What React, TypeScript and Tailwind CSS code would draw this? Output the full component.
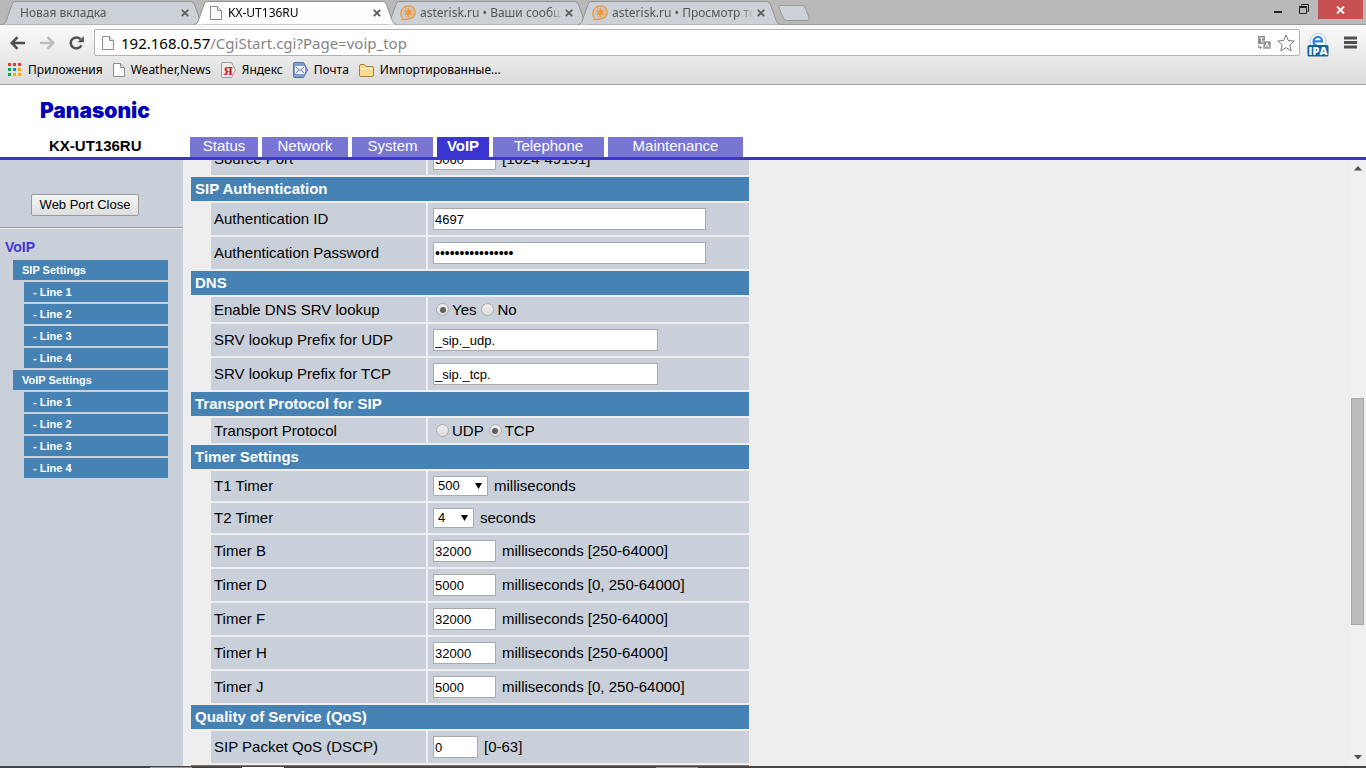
import React from "react";
import clsx from "clsx";

interface BrowserTab {
    title: string;
    icon?: React.ReactNode;
    active?: boolean;
}

interface FieldRowProps {
    label: string;
    htmlFor?: string;
    height?: string;
    children: React.ReactNode;
}

const FileIcon = () => (
    <svg width="12" height="14" viewBox="0 0 12 14" className="shrink-0">
        <path d="M0.5 0.5H7.5L11.5 4.5V13.5H0.5Z" fill="#fafafa" stroke="#8c8c8c" />
        <path d="M7.5 0.5V4.5H11.5" fill="#e4e4e4" stroke="#8c8c8c" />
    </svg>
);

const AsteriskIcon = () => (
    <svg width="16" height="16" viewBox="0 0 16 16" fill="none" stroke="#f0973a" className="shrink-0">
        <path d="M3 13.2C1.2 11.8 0.7 9.5 0.9 7.5C1.6 3.6 5 1 8.6 1C12.6 1 15.2 3.8 15.2 7.2C15.2 11 12.2 13.4 9 13.6L5 14.6L1 14.4" strokeWidth="1.3" />
        <path d="M13 7.4C13 10 11 12 8.4 12C5.8 12 3.6 10.4 3.6 7.6C3.6 5 5.6 2.9 8.4 2.9C11 2.9 13 4.8 13 7.4Z" strokeWidth="0.6" />
        <path d="M8.3 3.6V11.2M5 5.5L11.6 9.3M11.6 5.5L5 9.3" strokeWidth="2" />
    </svg>
);

const CloseIcon = () => (
    <svg width="8" height="8" viewBox="0 0 8 8" stroke="#5a5a5a" strokeWidth="1.8">
        <path d="M0.8 0.8L7.2 7.2M7.2 0.8L0.8 7.2" />
    </svg>
);

const browserTabs: BrowserTab[] = [
    { title: "Новая вкладка" },
    { title: "KX-UT136RU", icon: <FileIcon />, active: true },
    { title: "asterisk.ru • Ваши сообщения", icon: <AsteriskIcon /> },
    { title: "asterisk.ru • Просмотр темы", icon: <AsteriskIcon /> },
];

const AppsIcon = () => (
    <svg width="14" height="14" viewBox="0 0 14 14">
        <path d="M0 0h3v3H0zM5 0h3v3H5zM10 0h3v3h-3z" fill="#e53a35" />
        <path d="M0 5h3v3H0z" fill="#1f9d55" />
        <path d="M5 5h3v3H5z" fill="#2f7de1" />
        <path d="M10 5h3v3h-3zM10 10h3v3h-3zM5 10h3v3H5z" fill="#f5a800" />
        <path d="M0 10h3v3H0z" fill="#1f9d55" />
    </svg>
);

const YandexIcon = () => (
    <svg width="15" height="16" viewBox="0 0 15 16">
        <path d="M1.5 0.5H10.5L14.5 8L10.5 15.5H1.5Q0.5 15.5 0.5 14.5V1.5Q0.5 0.5 1.5 0.5Z" fill="#ececec" stroke="#9c9c9c" />
        <text x="2.5" y="13" fontSize="13" fontWeight="700" fontFamily="Liberation Serif, serif" fill="#e01010">Я</text>
    </svg>
);

const MailIcon = () => (
    <svg width="15" height="16" viewBox="0 0 15 16">
        <path d="M1.5 0.5H10.5L14.5 8L10.5 15.5H1.5Q0.5 15.5 0.5 14.5V1.5Q0.5 0.5 1.5 0.5Z" fill="#7f9bd0" stroke="#5470ad" />
        <path d="M2.5 4.5H11.5V11.5H2.5Z" fill="#eef3fb" stroke="#fff" />
        <path d="M2.5 4.5L7 8.5L11.5 4.5M2.5 11.5L5.8 7.8M11.5 11.5L8.2 7.8" fill="none" stroke="#5d79b5" />
    </svg>
);

const FolderIcon = () => (
    <svg width="15" height="13" viewBox="0 0 15 13">
        <path d="M0.5 11.5V2Q0.5 0.5 2 0.5H5.5L7 2.5H13Q14.5 2.5 14.5 4V11Q14.5 12.5 13 12.5H2Q0.5 12.5 0.5 11.5Z" fill="#fbdc8c" stroke="#a67e35" />
        <path d="M1.5 4.5H13.5" stroke="#fff3cd" />
    </svg>
);

const bookmarks = [
    { title: "Приложения", icon: <AppsIcon /> },
    { title: "Weather,News", icon: <FileIcon /> },
    { title: "Яндекс", icon: <YandexIcon /> },
    { title: "Почта", icon: <MailIcon /> },
    { title: "Импортированные...", icon: <FolderIcon /> },
];

const menuTabs = [
    { title: "Status", width: "w-[68px]" },
    { title: "Network", width: "w-[86px]" },
    { title: "System", width: "w-[81px]" },
    { title: "VoIP", width: "w-[52px]", active: true },
    { title: "Telephone", width: "w-[111px]" },
    { title: "Maintenance", width: "w-[135px]" },
];

const sideMenu = [
    { title: "SIP Settings", lines: ["Line 1", "Line 2", "Line 3", "Line 4"] },
    { title: "VoIP Settings", lines: ["Line 1", "Line 2", "Line 3", "Line 4"] },
];

const timers = [
    { name: "Timer B", value: "32000", unit: "milliseconds [250-64000]" },
    { name: "Timer D", value: "5000", unit: "milliseconds [0, 250-64000]" },
    { name: "Timer F", value: "32000", unit: "milliseconds [250-64000]" },
    { name: "Timer H", value: "32000", unit: "milliseconds [250-64000]" },
    { name: "Timer J", value: "5000", unit: "milliseconds [0, 250-64000]" },
];

const TabStrip = () => (
    <div className="flex h-6 items-stretch bg-[#b9b9b9] pl-[2px]">
        {browserTabs.map((tab) => (
            <div
                key={tab.title}
                className={clsx("relative -mr-[9px] flex w-[201px] shrink-0 items-center pr-[14px] pt-[2px]", tab.active && "z-10", tab.icon ? "pl-[14px]" : "pl-[18px]")}
            >
                <svg width="204" height="25" viewBox="0 0 204 25" className="absolute left-0 top-0">
                    <path
                        d="M0 24.5C3 24 3.5 22.5 4.5 20L10 4.5C11 2 12 1.5 14 1.5H188C190 1.5 191.5 2 192.5 4.5L198 20C199 22.5 200 24 203 24.5"
                        fill={tab.active ? "#fdfdfd" : "#ccd0d7"}
                        stroke="#929292"
                    />
                </svg>
                {tab.icon && <span className="relative mr-1 flex w-4 justify-center">{tab.icon}</span>}
                <span
                    className={clsx(
                        "relative min-w-0 flex-1 overflow-hidden whitespace-nowrap text-[12px] leading-4 [mask-image:linear-gradient(to_right,#000_92%,transparent)]",
                        tab.active ? "text-black" : "text-[#555]"
                    )}
                >
                    {tab.title}
                </span>
                <button type="button" aria-label="Закрыть" className="relative ml-1">
                    <CloseIcon />
                </button>
            </div>
        ))}
        <button type="button" aria-label="Новая вкладка" className="relative ml-[8px] mt-[5px] self-start">
            <svg width="33" height="16" viewBox="0 0 33 16">
                <path d="M2 0.5H24Q26 0.5 27 2.5L31 12Q32 15.5 29.5 15.5H8.5Q6.5 15.5 5.5 13.5L1 3Q0 0.5 2 0.5Z" fill="#ccd0d7" stroke="#999" />
            </svg>
        </button>
        <div className="ml-auto flex items-start pr-[3px]">
            <button type="button" aria-label="Свернуть" className="p-[6px]">
                <svg width="10" height="10" viewBox="0 0 10 10">
                    <path d="M0 5H8V7H0Z" fill="#222" />
                </svg>
            </button>
            <button type="button" aria-label="Восстановить" className="ml-[5px] p-1">
                <svg width="10" height="11" viewBox="0 0 10 11" fill="none" stroke="#222">
                    <path d="M2.5 1.5V0.5H9.5V7.5H8.5" />
                    <path d="M0.5 3.5H7.5V9.5H0.5ZM0 2.5H8" />
                </svg>
            </button>
            <button type="button" aria-label="Закрыть окно" className="ml-[5px] flex h-[19px] w-[45px] items-center justify-center bg-[#c75050]">
                <svg width="9" height="8" viewBox="0 0 9 8" stroke="#fff" strokeWidth="1.8">
                    <path d="M1 0.5L8 7.5M8 0.5L1 7.5" />
                </svg>
            </button>
        </div>
    </div>
);

const Toolbar = () => (
    <div className="flex h-[33px] items-end border-t border-[#999] pl-[10px] pr-[9px]">
        <div className="mb-px flex h-[27px] items-center">
            <button type="button" aria-label="Назад" className="mr-[13px]">
                <svg width="16" height="14" viewBox="0 0 16 14" fill="none" stroke="#505050" strokeWidth="2.6">
                    <path d="M15 7H2M7.5 1.2L1.8 7L7.5 12.8" />
                </svg>
            </button>
            <button type="button" aria-label="Вперёд" className="mr-[14px]">
                <svg width="16" height="14" viewBox="0 0 16 14" fill="none" stroke="#bcbcbc" strokeWidth="2.6">
                    <path d="M1 7H14M8.5 1.2L14.2 7L8.5 12.8" />
                </svg>
            </button>
            <button type="button" aria-label="Обновить" className="mr-[10px]">
                <svg width="15" height="14" viewBox="0 0 15 14" fill="none">
                    <path d="M12.4 9.2A5.6 5.4 0 1 1 11.4 3.2" stroke="#505050" strokeWidth="2.5" />
                    <path d="M14.8 0V6.2H8.6Z" fill="#505050" />
                </svg>
            </button>
        </div>
        <div className="mb-px flex h-[27px] flex-1 items-center rounded-[2px] border border-[#b3b3b3] bg-white pl-[7px] pr-[4px]">
            <FileIcon />
            <p className="ml-[7px] flex-1 text-[15px] leading-5 text-[#858585]">
                <span className="text-black">192.168.0.57</span>/CgiStart.cgi?Page=voip_top
            </p>
            <button type="button" aria-label="Перевести" className="mr-[6px]">
                <svg width="14" height="14" viewBox="0 0 14 14">
                    <path d="M1 0H8V8H1Z" fill="#909090" />
                    <path d="M6 5H14V13H6Z" fill="#909090" stroke="#fff" strokeWidth="0.6" />
                    <path d="M2.5 2H6.5M4.5 2V6" stroke="#fff" />
                    <path d="M8 11.5L10 6.8L12 11.5M8.7 10H11.3" stroke="#fff" fill="none" />
                    <path d="M1.5 9V11.5H4.5M3 10L4.5 11.5L3 13" stroke="#909090" fill="none" />
                </svg>
            </button>
            <button type="button" aria-label="Закладка">
                <svg width="18" height="18" viewBox="0 0 18 18">
                    <path d="M9 1L11.3 6.5L17.3 7L12.8 10.8L14.2 16.8L9 13.6L3.8 16.8L5.2 10.8L0.7 7L6.7 6.5Z" fill="#fff" stroke="#7c7c7c" strokeLinejoin="round" />
                </svg>
            </button>
        </div>
        <button type="button" aria-label="IPA" className="ml-[7px]">
            <svg width="22" height="24" viewBox="0 0 22 24">
                <circle cx="11" cy="8.5" r="8" fill="#fff" stroke="#a8c6e6" />
                <path d="M6.5 8.4H15C15 5.6 13.3 3.9 11 3.9C8.6 3.9 6.5 5.8 6.5 8.4C6.5 11 8.6 12.8 11 12.8" fill="none" stroke="#2f84dd" strokeWidth="2.2" />
                <rect x="0.5" y="12" width="21" height="11.5" rx="1.5" fill="#0c6598" />
                <text x="11" y="22" textAnchor="middle" fontSize="11" fontWeight="800" fontFamily="Open Sans, sans-serif" fill="#fff">IPA</text>
            </svg>
        </button>
        <button type="button" aria-label="Меню" className="mb-[8px] ml-[15px]">
            <svg width="13" height="13" viewBox="0 0 13 13">
                <path d="M0 0.5H13V3.5H0ZM0 5H13V8H0ZM0 9.5H13V12.5H0Z" fill="#505050" />
            </svg>
        </button>
    </div>
);

const SectionRow = ({ title }: { title: string }) => (
    <tr>
        <th colSpan={3} scope="colgroup" className="h-6 bg-[#4682b4] px-1 text-left font-bold text-white">
            {title}
        </th>
    </tr>
);

const FieldRow = ({ label, htmlFor, height = "h-8", children }: FieldRowProps) => (
    <tr>
        <td />
        <td className={clsx("bg-[#c9d0da] pl-[3px]", height)}>
            {htmlFor ? <label htmlFor={htmlFor}>{label}</label> : label}
        </td>
        <td className={clsx("bg-[#c9d0da] pl-[5px]", height)}>
            <div className="flex items-center">{children}</div>
        </td>
    </tr>
);

const TextField = ({ id, value, width, type = "text" }: { id: string; value: string; width: string; type?: string }) => (
    <input
        id={id}
        type={type}
        defaultValue={value}
        autoComplete="off"
        className={clsx(
            "mr-[6px] h-[22px] border border-[#a9a9a9] bg-white px-px leading-4 text-black outline-none",
            type === "password" ? "text-[14px]" : "text-[13px]",
            width
        )}
    />
);

const RadioField = ({ name, label, checked }: { name: string; label: string; checked?: boolean }) => (
    <label className="mr-[2px] flex items-center">
        <input
            type="radio"
            name={name}
            defaultChecked={checked}
            className="mx-[3px] flex h-[13px] w-[13px] appearance-none items-center justify-center rounded-full border border-[#acacac] bg-linear-to-b from-[#eee] to-[#dcdcdc] before:h-[6px] before:w-[6px] before:rounded-full checked:before:bg-[#606060] checked:before:content-['']"
        />
        {label}
    </label>
);

const SelectField = ({ id, options, width }: { id: string; options: string[]; width: string }) => (
    <span className="relative mr-[6px] flex items-center">
        <select id={id} className={clsx("h-5 appearance-none rounded-[1px] border border-[#a9a9a9] bg-white pl-1 text-[13px] leading-4 text-black", width)}>
            {options.map((option) => (
                <option key={option}>{option}</option>
            ))}
        </select>
        <svg width="7" height="6" viewBox="0 0 7 6" className="pointer-events-none absolute right-[6px]">
            <path d="M0 0H7L3.5 6Z" fill="#000" />
        </svg>
    </span>
);

const Sidebar = () => (
    <aside className="w-[183px] shrink-0 bg-[#c9d0da]">
        <div className="pb-[11px] pl-[31px] pt-[34px]">
            <button type="button" className="block h-[22px] w-[108px] rounded-[2px] border border-[#9a9a9a] bg-linear-to-b from-[#f6f6f6] to-[#dedede] text-[13px] leading-4 text-black">
                Web Port Close
            </button>
        </div>
        <hr className="border-b border-t border-b-[#eee] border-t-[#999]" />
        <nav className="pr-[15px] pt-2">
            <h2 className="mb-[3px] pl-[5px] text-[14px] font-bold leading-5 text-[#3f38d4]">VoIP</h2>
            {sideMenu.map((group) => (
                <ul key={group.title} className="text-[11px] font-bold leading-5 text-white">
                    <li className="mb-[2px] ml-[13px] bg-[#4682b4] pl-[9px]">
                        <a href="#">{group.title}</a>
                    </li>
                    {group.lines.map((line) => (
                        <li key={line} className="mb-[2px] ml-6 bg-[#4682b4] pl-[9px]">
                            <a href="#">- {line}</a>
                        </li>
                    ))}
                </ul>
            ))}
        </nav>
    </aside>
);

const SettingsTable = () => (
    // top rows are scrolled under the page header
    <table className="-mt-[19px] w-[562px] table-fixed border-separate border-spacing-[2px] text-[15px] leading-5 text-black">
        <colgroup>
            <col className="w-[18px]" />
            <col className="w-[215px]" />
            <col />
        </colgroup>
        <tbody>
            <FieldRow label="Source Port" htmlFor="sourcePort">
                <TextField id="sourcePort" value="5060" width="w-[63px]" />
                [1024-49151]
            </FieldRow>

            <SectionRow title="SIP Authentication" />
            <FieldRow label="Authentication ID" htmlFor="authId">
                <TextField id="authId" value="4697" width="w-[273px]" />
            </FieldRow>
            <FieldRow label="Authentication Password" htmlFor="authPassword">
                <TextField id="authPassword" type="password" value="0123456789abcdef" width="w-[273px]" />
            </FieldRow>

            <SectionRow title="DNS" />
            <FieldRow label="Enable DNS SRV lookup" height="h-[25px]">
                <RadioField name="dnsSrv" label="Yes" checked />
                <RadioField name="dnsSrv" label="No" />
            </FieldRow>
            <FieldRow label="SRV lookup Prefix for UDP" htmlFor="srvUdp">
                <TextField id="srvUdp" value="_sip._udp." width="w-[225px]" />
            </FieldRow>
            <FieldRow label="SRV lookup Prefix for TCP" htmlFor="srvTcp">
                <TextField id="srvTcp" value="_sip._tcp." width="w-[225px]" />
            </FieldRow>

            <SectionRow title="Transport Protocol for SIP" />
            <FieldRow label="Transport Protocol" height="h-[25px]">
                <RadioField name="transport" label="UDP" />
                <RadioField name="transport" label="TCP" checked />
            </FieldRow>

            <SectionRow title="Timer Settings" />
            <FieldRow label="T1 Timer" htmlFor="t1" height="h-[30px]">
                <SelectField id="t1" options={["500", "250", "1000"]} width="w-[55px]" />
                milliseconds
            </FieldRow>
            <FieldRow label="T2 Timer" htmlFor="t2" height="h-[30px]">
                <SelectField id="t2" options={["4", "1", "2", "8"]} width="w-[41px]" />
                seconds
            </FieldRow>
            {timers.map((timer) => (
                <FieldRow key={timer.name} label={timer.name} htmlFor={timer.name}>
                    <TextField id={timer.name} value={timer.value} width="w-[63px]" />
                    {timer.unit}
                </FieldRow>
            ))}

            <SectionRow title="Quality of Service (QoS)" />
            <FieldRow label="SIP Packet QoS (DSCP)" htmlFor="sipQos">
                <TextField id="sipQos" value="0" width="w-[45px]" />
                [0-63]
            </FieldRow>
            <SectionRow title="SIP extensions" />
        </tbody>
    </table>
);

const Scrollbar = () => (
    <div className="flex w-[17px] shrink-0 flex-col items-center bg-[#f0f0f0] py-[6px]">
        <svg width="8" height="5" viewBox="0 0 8 5">
            <path d="M4 0L8 4.5H0Z" fill="#505050" />
        </svg>
        <div className="grow-[228]" />
        <div className="w-[13px] grow-[226] border border-[#a6a6a6] bg-[#bcbcbc]" />
        <div className="grow-[130]" />
        <svg width="8" height="5" viewBox="0 0 8 5">
            <path d="M4 4.5L8 0H0Z" fill="#505050" />
        </svg>
    </div>
);

export default function App() {
    return (
        <div className="flex h-screen flex-col overflow-hidden bg-[#eee] font-['Liberation_Sans',Arial,sans-serif]">
            <div className="shrink-0 font-['Noto_Sans',sans-serif]">
                <TabStrip />
                <div className="border-b border-[#a8a8a8] bg-linear-to-b from-[#fbfbfb] to-[#dcdcdc]">
                    <Toolbar />
                    <div className="flex h-[27px] items-center gap-[10px] pb-px pl-2 text-[12px] leading-4 text-black">
                        {bookmarks.map((bookmark) => (
                            <a key={bookmark.title} href="#" className="flex items-center gap-[6px]">
                                {bookmark.icon}
                                {bookmark.title}
                            </a>
                        ))}
                    </div>
                </div>
            </div>

            <header className="flex h-[75px] shrink-0 items-end border-b-[3px] border-[#3b35d2] bg-white text-[15px] leading-[18px]">
                <div className="w-[190px] shrink-0">
                    <div className="mb-[14px] pl-10 font-['Inter',sans-serif] text-[21px] font-black leading-[24px] text-[#0000b8]">Panasonic</div>
                    <div className="pb-[2px] pl-[49px] font-bold text-black">KX-UT136RU</div>
                </div>
                <nav className="flex gap-1">
                    {menuTabs.map((item) => (
                        <a
                            key={item.title}
                            href="#"
                            className={clsx("h-5 text-center text-white", item.width, item.active ? "bg-[#3b35d2] font-bold" : "bg-[#7975d3]")}
                        >
                            {item.title}
                        </a>
                    ))}
                </nav>
            </header>

            <div className="flex min-h-0 flex-1">
                <Sidebar />
                <main className="min-w-0 flex-1 overflow-hidden pl-[6px]">
                    <SettingsTable />
                </main>
                <Scrollbar />
            </div>

            {/* edge of the desktop taskbar */}
            <div className="flex h-[2px] shrink-0 bg-[#454545] pt-px">
                <div className="ml-[150px] w-[42px] bg-[#999]" />
                <div className="ml-[50px] w-[42px] bg-white" />
                <div className="ml-[372px] w-[42px] bg-[#999]" />
            </div>
        </div>
    );
}
